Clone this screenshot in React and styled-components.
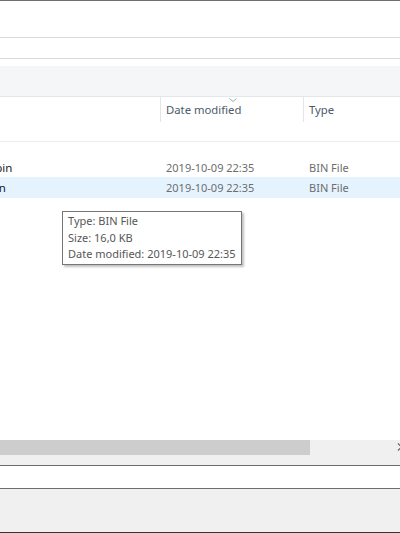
import React from "react";
import styled, { createGlobalStyle } from "styled-components";

const files = [
  { name: "firmware_01.bin", date: "2019-10-09 22:35", type: "BIN File" },
  { name: "firmware_1.bin", date: "2019-10-09 22:35", type: "BIN File", selected: true },
];

const App = () => {
  return (
    <Window>
      <GlobalStyle />
      <Frame />
      <AddressBar />
      <Rule />
      <SearchBar />
      <Rule />
      <Gap $h={7} />
      <Ribbon />
      <Rule $c="#e3e6ea" />
      <HeaderRow>
        <NameCol $w={160} />
        <HeadCell $w={143}>
          Date modified
          <SortArrow viewBox="0 0 8 4">
            <path d="M0.5 0.5 L4 3.5 L7.5 0.5" />
          </SortArrow>
        </HeadCell>
        <HeadCell $w={97}>Type</HeadCell>
      </HeaderRow>
      <Gap $h={19} />
      <Rule $c="#ececec" />
      <Gap $h={15} />
      <List>
        {files.map((f) => (
          <FileRow key={f.name} $selected={f.selected}>
            <NameCell>
              <NameText>{f.name}</NameText>
            </NameCell>
            <DataCell $w={143}>{f.date}</DataCell>
            <DataCell $w={97}>{f.type}</DataCell>
          </FileRow>
        ))}
        <Tooltip>
          <div>Type: BIN File</div>
          <div>Size: 16,0 KB</div>
          <div>Date modified: 2019-10-09 22:35</div>
        </Tooltip>
      </List>
      <HScroll>
        <Thumb />
        <ScrollArrow viewBox="0 0 6 8">
          <path d="M1 0.5 L4.5 4 L1 7.5" />
        </ScrollArrow>
      </HScroll>
      <Frame />
      <FileNameBar />
      <Frame />
      <Footer />
      <Frame $c="#333" />
    </Window>
  );
};

const GlobalStyle = createGlobalStyle`
  html, body {
    margin: 0;
    padding: 0;
    background: #fff;
  }
  body {
    font-family: "Noto Sans", "Open Sans", sans-serif;
    font-size: 11px;
  }
`;

const Window = styled.div`
  width: 400px;
  height: 533px;
  display: flex;
  flex-direction: column;
  overflow: hidden;
  background: #fff;
`;

const Frame = styled.div`
  height: 1px;
  flex: none;
  background: ${(p) => p.$c || "#6e6e6e"};
`;

const Rule = styled.div`
  height: 1px;
  flex: none;
  background: ${(p) => p.$c || "#d9d9d9"};
`;

const Gap = styled.div`
  height: ${(p) => p.$h}px;
  flex: none;
`;

const AddressBar = styled.div`
  height: 36px;
  flex: none;
`;

const SearchBar = styled.div`
  height: 20px;
  flex: none;
`;

const Ribbon = styled.div`
  height: 30px;
  flex: none;
  background: #f5f6f7;
`;

const HeaderRow = styled.div`
  height: 25px;
  flex: none;
  display: flex;
`;

const NameCol = styled.div`
  width: ${(p) => p.$w}px;
  flex: none;
`;

const HeadCell = styled.div`
  position: relative;
  width: ${(p) => p.$w}px;
  flex: none;
  box-sizing: border-box;
  border-left: 1px solid #e5e5e5;
  padding-left: 5px;
  display: flex;
  align-items: center;
  color: #4c5a6b;
  font-size: 11.3px;
`;

const SortArrow = styled.svg`
  position: absolute;
  top: 1px;
  left: 68px;
  width: 8px;
  height: 4px;
  fill: none;
  stroke: #a0a6ad;
  stroke-width: 1;
`;

const List = styled.div`
  position: relative;
  flex: 1;
  display: flex;
  flex-direction: column;
`;

const FileRow = styled.div`
  height: ${(p) => (p.$selected ? 21 : 20)}px;
  flex: none;
  display: flex;
  align-items: center;
  background: ${(p) => (p.$selected ? "#e5f3ff" : "transparent")};
`;

const NameCell = styled.div`
  width: 160px;
  flex: none;
  overflow: hidden;
  color: #1a1a1a;
  font-size: 11.5px;
`;

/* list is scrolled sideways, so the name column starts left of the view */
const NameText = styled.div`
  margin-left: -75px;
  white-space: nowrap;
`;

const DataCell = styled.div`
  width: ${(p) => p.$w}px;
  flex: none;
  box-sizing: border-box;
  padding-left: 6px;
  color: #6d6d6d;
  font-size: 11px;
  white-space: nowrap;
`;

const Tooltip = styled.div`
  position: absolute;
  left: 62px;
  top: 54px;
  padding: 1px 5px;
  background: #fff;
  border: 1px solid #767676;
  box-shadow: 2px 2px 2px rgba(0, 0, 0, 0.25);
  color: #575757;
  font-size: 11px;
  line-height: 16.5px;
  white-space: nowrap;
`;

const HScroll = styled.div`
  height: 25px;
  flex: none;
  display: flex;
  align-items: flex-start;
  justify-content: space-between;
  background: #f0f0f0;
`;

const Thumb = styled.div`
  width: 310px;
  height: 15px;
  background: #cdcdcd;
`;

const ScrollArrow = styled.svg`
  width: 6px;
  height: 8px;
  margin-top: 3px;
  margin-right: -3px;
  fill: none;
  stroke: #606060;
  stroke-width: 1.2;
`;

const FileNameBar = styled.div`
  height: 22px;
  flex: none;
  background: #fff;
`;

const Footer = styled.div`
  height: 43px;
  flex: none;
  background: #f0f0f0;
`;

export default App;
